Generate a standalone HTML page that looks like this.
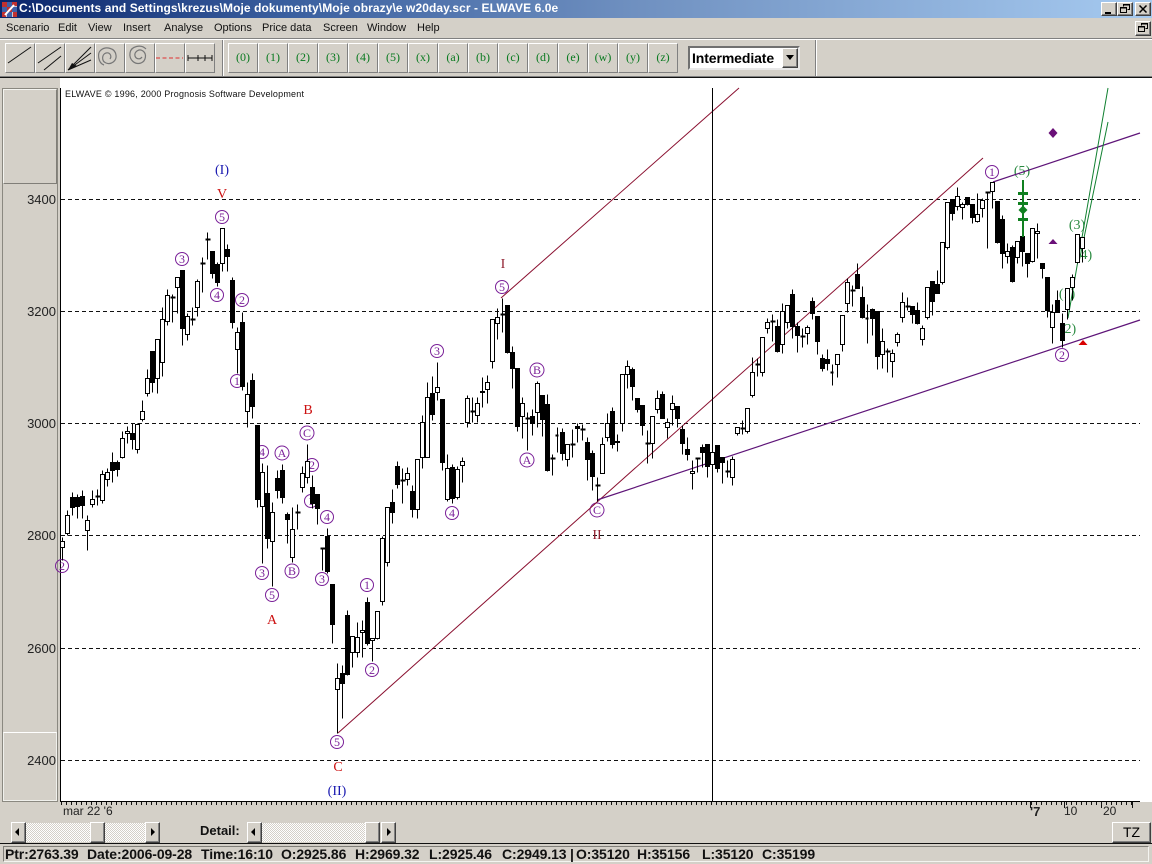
<!DOCTYPE html>
<html><head><meta charset="utf-8"><title>ELWAVE</title>
<style>
html,body{margin:0;padding:0;background:#d4d0c8;width:1152px;height:864px;overflow:hidden;font-family:"Liberation Sans",sans-serif}
.a{position:absolute}
#t{left:0;top:0;width:1152px;height:18px;background:linear-gradient(90deg,#0a246a 0,#3a5f9f 25%,#6f90c0 55%,#a6caf0 100%)}
#tt{left:19px;top:1px;color:#fff;font:bold 12px "Liberation Sans",sans-serif;white-space:nowrap;letter-spacing:.08px}
.w{box-sizing:border-box;background:#d4d0c8;border:1px solid;border-color:#fff #404040 #404040 #fff;box-shadow:inset -1px -1px 0 #808080}
.m{top:22px;font-size:11px;color:#111;white-space:nowrap}
.b{box-sizing:border-box;top:43px;width:30px;height:30px;background:#d4d0c8;border:1px solid;border-color:#fff #808080 #808080 #fff}
.g{font:12px/27px "Liberation Serif",serif;color:#0a7a20;text-align:center}
.tr{background:repeating-conic-gradient(#fff 0 25%,#d4d0c8 0 50%) 0 0/2px 2px}
.s{top:847px;font:bold 14px "Liberation Sans",sans-serif;color:#111;white-space:nowrap;line-height:15px;letter-spacing:-.1px}
</style></head><body>
<div class="a" id="t"></div>
<svg class="a" style="left:2px;top:2px" width="15" height="15"><rect width="15" height="15" fill="#c8c8d8"/><path d="M0 0h5v5H0zM10 0h5v4h-5zM5 5h5v5H5zM0 10h4v5H0zM11 10h4v5h-4z" fill="#c03030"/><path d="M5 0h5v5H5zM0 5h5v5H0zM10 5h5v5h-5zM5 10h5v5H5z" fill="#4060a8"/><path d="M3 13L12 3" stroke="#fff" stroke-width="2"/></svg>
<div class="a" id="tt">C:\Documents and Settings\krezus\Moje dokumenty\Moje obrazy\e w20day.scr - ELWAVE 6.0e</div>
<div class="a w" style="left:1101px;top:2px;width:16px;height:14px"><div class="a" style="left:3px;top:9px;width:6px;height:2px;background:#000"></div></div>
<div class="a w" style="left:1117px;top:2px;width:16px;height:14px"><svg class="a" style="left:2px;top:1px" width="10" height="10"><path d="M3.5 2.5V.5h6v5H7.500M.5 3.500h6v5h-6zM.5 4h6M3 1h6" fill="none" stroke="#000"/></svg></div>
<div class="a w" style="left:1135px;top:2px;width:16px;height:14px"><svg class="a" style="left:3px;top:2px" width="9" height="8"><path d="M.5 .5l7 7M7.500 .5l-7 7" stroke="#000" stroke-width="1.500"/></svg></div>
<div class="a w" style="left:1135px;top:21px;width:16px;height:15px"><svg class="a" style="left:2px;top:1px" width="10" height="10"><path d="M3.5 2.5V.5h6v5H7.500M.5 3.500h6v5h-6zM.5 4h6M3 1h6" fill="none" stroke="#000"/></svg></div>
<div class="a m" style="left:6px">Scenario</div><div class="a m" style="left:58px">Edit</div><div class="a m" style="left:88px">View</div><div class="a m" style="left:123px">Insert</div><div class="a m" style="left:164px">Analyse</div><div class="a m" style="left:214px">Options</div><div class="a m" style="left:262px">Price data</div><div class="a m" style="left:323px">Screen</div><div class="a m" style="left:367px">Window</div><div class="a m" style="left:417px">Help</div>
<div class="a" style="left:0;top:38px;width:1152px;height:1px;background:#808080"></div>
<div class="a" style="left:0;top:39px;width:1152px;height:1px;background:#fff"></div>
<div class="a b" style="left:5px"></div><div class="a b" style="left:35px"></div><div class="a b" style="left:65px"></div><div class="a b" style="left:95px"></div><div class="a b" style="left:125px"></div><div class="a b" style="left:155px"></div><div class="a b" style="left:185px"></div>
<svg class="a" style="left:0;top:40px" width="225" height="36" viewBox="0 40 225 36"><g fill="none" stroke="#111"><path d="M8 63L31 47M38 63L61 47M44 70L61 56M68 70L91 47M68 70L91 53M68 70L91 60"/><path d="M188 58H212M188 55V61M198 55V61M205 55V61M212 55V61"/></g><path d="M68 70l9-4-5-3z" fill="#111"/><g fill="none" stroke="#777" stroke-width="1.200"><path d="M104 65C98 63 97 53 101 50C106 46 115 48 116 55C117 61 111 65 106 63C101 61 102 54 106 53C110 52 112 56 110 59"/><path d="M146 49C141 44 131 46 130 53C129 60 135 65 141 63C146 61 147 54 143 51C139 48 134 52 135 56C136 59 140 60 142 57"/></g><path d="M156 58H183" stroke="#e03030" stroke-dasharray="4 2.500"/></svg>
<div class="a" style="left:222px;top:40px;width:1px;height:36px;background:#808080"></div><div class="a" style="left:223px;top:40px;width:1px;height:36px;background:#fff"></div>
<div class="a b g" style="left:228px">(0)</div><div class="a b g" style="left:258px">(1)</div><div class="a b g" style="left:288px">(2)</div><div class="a b g" style="left:318px">(3)</div><div class="a b g" style="left:348px">(4)</div><div class="a b g" style="left:378px">(5)</div><div class="a b g" style="left:408px">(x)</div><div class="a b g" style="left:438px">(a)</div><div class="a b g" style="left:468px">(b)</div><div class="a b g" style="left:498px">(c)</div><div class="a b g" style="left:528px">(d)</div><div class="a b g" style="left:558px">(e)</div><div class="a b g" style="left:588px">(w)</div><div class="a b g" style="left:618px">(y)</div><div class="a b g" style="left:648px">(z)</div>
<div class="a" style="box-sizing:border-box;left:688px;top:46px;width:112px;height:24px;background:#fff;border:2px solid;border-color:#707070 #e8e8e8 #e8e8e8 #707070;font:bold 14px/20px 'Liberation Sans',sans-serif;color:#000;padding-left:2px;letter-spacing:-.1px">Intermediate</div>
<div class="a w" style="left:782px;top:48px;width:16px;height:20px"><div class="a" style="left:3px;top:6px;width:0;height:0;border:4px solid transparent;border-top:5px solid #000;border-bottom:0"></div></div>
<div class="a" style="left:815px;top:40px;width:1px;height:36px;background:#808080"></div><div class="a" style="left:816px;top:40px;width:1px;height:36px;background:#fff"></div>
<div class="a" style="left:0;top:76px;width:1152px;height:1px;background:#808080"></div>
<div class="a" style="left:0;top:77px;width:1152px;height:1px;background:#111"></div>
<!-- left panel -->
<div class="a" style="box-sizing:border-box;left:2px;top:88px;width:56px;height:714px;border:1px solid #8a8880;background:#d4d0c8"></div>
<div class="a" style="box-sizing:border-box;left:3px;top:89px;width:54px;height:95px;border:1px solid;border-color:#f4f4f0 #807e78 #807e78 #f4f4f0;background:#d4d0c8"></div>
<div class="a" style="box-sizing:border-box;left:3px;top:732px;width:54px;height:69px;border:1px solid;border-color:#fff #f0f0ec #f0f0ec #f0f0ec;background:#d4d0c8"></div>
<!-- chart -->
<svg class="a" style="left:0;top:0" width="1152" height="864" viewBox="0 0 1152 864">
<rect x="60" y="78" width="1092" height="724" fill="#fff"/>
<path d="M60.500 88V802M60 801.500H1140" stroke="#000" fill="none"/>
<path d="M61 803.500H1133" stroke="#111" stroke-width="3" stroke-dasharray="1 4"/>
<path d="M1030.500 802V808M1064.500 802V808M1101.500 802V808M1132.500 802V808" stroke="#111"/>
<g font-family="Liberation Sans" font-size="13" fill="#222" text-anchor="end"><text x="56" y="204">3400</text><text x="56" y="316">3200</text><text x="56" y="428">3000</text><text x="56" y="540">2800</text><text x="56" y="653">2600</text><text x="56" y="765">2400</text></g>
<g font-family="Liberation Sans" font-size="12" fill="#222"><text x="63" y="815">mar 22 '6</text><text x="1064" y="815">10</text><text x="1103" y="815">20</text><text x="1030" y="816" font-weight="bold" font-size="13">'7</text></g>
<text x="65" y="97" font-family="Liberation Sans" font-size="9" fill="#111" textLength="239">ELWAVE © 1996, 2000 Prognosis Software Development</text>
<path d="M61 199.500H1140M61 311.500H1140M61 423.500H1140M61 535.500H1140M61 648.500H1140M61 760.500H1140" stroke="#111" stroke-dasharray="4 3"/>
<!-- labels -->
<g fill="none" stroke="#7a2098" stroke-width="1">
<circle cx="62" cy="566" r="6.500"/><circle cx="182" cy="259" r="6.500"/><circle cx="222" cy="217" r="6.500"/><circle cx="217" cy="295" r="6.500"/><circle cx="242" cy="300" r="6.500"/><circle cx="237" cy="381" r="6.500"/><circle cx="262" cy="452" r="6.500"/><circle cx="282" cy="453" r="7"/><circle cx="307" cy="433" r="7"/><circle cx="312" cy="465" r="6.500"/><circle cx="311" cy="501" r="6.500"/><circle cx="327" cy="517" r="6.500"/><circle cx="322" cy="579" r="6.500"/><circle cx="262" cy="573" r="6.500"/><circle cx="272" cy="595" r="6.500"/><circle cx="292" cy="571" r="7"/><circle cx="367" cy="585" r="6.500"/><circle cx="372" cy="670" r="6.500"/><circle cx="337" cy="742" r="6.500"/><circle cx="452" cy="513" r="6.500"/><circle cx="437" cy="351" r="6.500"/><circle cx="502" cy="287" r="6.500"/><circle cx="537" cy="370" r="7"/><circle cx="527" cy="460" r="7"/><circle cx="597" cy="510" r="7"/><circle cx="992" cy="172" r="6.500"/><circle cx="1062" cy="355" r="6.500"/>
</g>
<g font-family="Liberation Serif" font-size="12" fill="#7a2098" text-anchor="middle">
<text x="62" y="570">2</text><text x="182" y="263">3</text><text x="222" y="221">5</text><text x="217" y="299">4</text><text x="242" y="304">2</text><text x="237" y="385">1</text><text x="262" y="456">4</text><text x="282" y="457">A</text><text x="307" y="437">C</text><text x="312" y="469">2</text><text x="311" y="505">1</text><text x="327" y="521">4</text><text x="322" y="583">3</text><text x="262" y="577">3</text><text x="272" y="599">5</text><text x="292" y="575">B</text><text x="367" y="589">1</text><text x="372" y="674">2</text><text x="337" y="746">5</text><text x="452" y="517">4</text><text x="437" y="355">3</text><text x="502" y="291">5</text><text x="537" y="374">B</text><text x="527" y="464">A</text><text x="597" y="514">C</text><text x="992" y="176">1</text><text x="1062" y="359">2</text>
</g>
<g font-family="Liberation Serif" font-size="14" text-anchor="middle">
<g fill="#cc1010"><text x="222" y="198">V</text><text x="308" y="414">B</text><text x="272" y="624">A</text><text x="338" y="771">C</text></g>
<g fill="#902030"><text x="503" y="268">I</text><text x="597" y="539">II</text></g>
<g fill="#1818b0"><text x="222" y="174">(I)</text><text x="337" y="795">(II)</text></g>
<g fill="#2a8a40"><text x="1022" y="175">(5)</text><text x="1077" y="229">(3)</text><text x="1084" y="259">(4)</text><text x="1067" y="298">(1)</text><text x="1068" y="333">(2)</text></g>
</g>
<!-- trend lines -->
<g fill="none">
<path d="M338 733L983 158M501 298L739 88" stroke="#8a1030"/>
<path d="M597 500L1140 320M993 182L1140 133" stroke="#5e1478" stroke-width="1.200"/>
<path d="M1068 318L1108 88M1079 262L1108 122" stroke="#108030"/>
<path d="M712.500 88V802" stroke="#000"/>
</g>
<!-- candles -->
<g transform="translate(.5 .5)" shape-rendering="crispEdges" fill="none" stroke="#000">
<path d="M62 537V560M67 510V535M72 492V515M77 494V518M82 490V518M87 515V550M92 490V507M97 489V505M102 470V503M107 468V486M112 452V482M117 460V476M122 431V458M127 426V443M132 423V449M137 423V453M142 400V421M147 369V396M152 351V392M157 339V393M162 307V376M167 289V325M172 294V322M177 277V313M182 270V345M187 313V340M192 307V325M197 279V316M202 257V292M207 232V259M212 251V278M217 262V286M222 228V271M227 244V271M232 277V328M237 327V373M242 312V390M247 382V427M252 373V418M257 425V507M262 463V563M267 465V548M272 502V586M277 470V498M282 464V503M287 512V543M292 507V562M297 504V529M302 466V492M307 444V483M312 475V508M317 494V524M322 547V570M327 528V573M332 584V643M337 663V733M342 665V718M347 610V675M352 636V667M357 622V657M362 620V657M367 597V645M372 638V661M377 611V639M382 536V605M387 507V566M392 489V523M397 461V488M402 468V503M407 467V485M412 485V517M417 459V518M422 415V468M427 382V457M432 376V420M437 362V400M442 399V470M447 454V501M452 464V503M457 466V499M462 457V482M467 395V427M472 397V422M477 397V422M482 377V407M487 375V403M492 319V368M497 308V339M502 298V332M507 305V353M512 346V388M517 368V431M522 397V438M527 412V450M532 409V435M537 381V427M542 395V436M547 394V471M552 454V475M557 427V452M562 428V460M567 444V466M572 429V457M577 423V442M582 424V440M587 437V480M592 450V490M597 477V501M602 437V473M607 413V441M612 407V448M617 434V451M622 374V431M627 360V388M632 367V400M637 398V412M642 405V435M647 430V463M652 416V458M657 390V413M662 391V418M667 418V438M672 395V425M677 406V427M682 425V454M687 437V460M692 460V489M697 457V472M702 444V467M707 444V477M717 445V472M722 457V483M727 460V477M732 456V485M737 427V435M742 420V434M747 408V433M752 357V397M757 358V376M762 337V376M767 318V333M772 314V341M777 319V352M782 303V353M787 305V328M792 289V338M797 322V352M802 328V347M807 325V344M812 297V319M817 316V354M822 354V371M827 349V370M832 364V385M837 354V377M842 315V351M847 278V312M852 285V306M857 263V288M862 286V318M867 304V343M872 308V335M877 311V369M882 328V368M887 348V372M892 349V377M897 332V346M902 292V322M907 297V310M912 306V323M917 302V324M922 325V345M927 287V319M932 281V315M937 270V293M942 242V284M947 202V249M952 199V220M957 187V210M962 202V219M967 197V205M972 204V223M977 193V222M982 198V217M987 192V248M992 182V208M997 201V243M1002 215V268M1007 243V263M1012 245V282M1017 241V263M1022 234V266M1027 253V277M1032 228V262M1037 223V258M1042 263V278M1047 277V317M1052 304V343M1057 290V312M1062 313V347M1067 288V319M1072 274V300M1077 234V263M1082 237V262"/>
<path fill="#fff" d="M60 541h4v6h-4zM65 515h4v18h-4zM85 520h4v10h-4zM90 499h4v5h-4zM100 474h4v26h-4zM105 472h4v7h-4zM120 438h4v19h-4zM125 431h4v2h-4zM135 424h4v25h-4zM140 411h4v8h-4zM145 378h4v15h-4zM155 339h4v39h-4zM160 319h4v43h-4zM165 295h4v26h-4zM175 277h4v10h-4zM185 316h4v18h-4zM195 281h4v26h-4zM220 228h4v35h-4zM235 332h4v17h-4zM245 394h4v17h-4zM260 472h4v34h-4zM270 512h4v29h-4zM290 529h4v28h-4zM300 473h4v14h-4zM305 461h4v16h-4zM335 678h4v11h-4zM350 636h4v16h-4zM355 637h4v15h-4zM360 630h4v2h-4zM370 638h4v2h-4zM375 611h4v27h-4zM380 538h4v63h-4zM385 507h4v55h-4zM405 473h4v6h-4zM415 459h4v50h-4zM420 422h4v35h-4zM425 397h4v60h-4zM435 387h4v5h-4zM445 468h4v31h-4zM455 469h4v28h-4zM460 461h4v4h-4zM465 398h4v24h-4zM475 403h4v12h-4zM480 391h4v1h-4zM485 382h4v7h-4zM490 319h4v42h-4zM495 317h4v6h-4zM520 403h4v13h-4zM535 383h4v29h-4zM565 444h4v15h-4zM600 444h4v29h-4zM605 423h4v14h-4zM615 441h4v1h-4zM620 374h4v49h-4zM625 366h4v8h-4zM650 416h4v27h-4zM655 398h4v11h-4zM665 422h4v5h-4zM670 403h4v6h-4zM690 471h4v2h-4zM710 452h4v12h-4zM730 459h4v18h-4zM735 427h4v6h-4zM745 408h4v23h-4zM750 372h4v23h-4zM760 337h4v35h-4zM765 322h4v6h-4zM780 311h4v33h-4zM785 305h4v17h-4zM805 327h4v6h-4zM835 354h4v10h-4zM840 315h4v29h-4zM845 282h4v21h-4zM880 341h4v13h-4zM890 353h4v8h-4zM895 334h4v8h-4zM900 302h4v15h-4zM920 328h4v11h-4zM925 287h4v30h-4zM940 242h4v40h-4zM945 202h4v45h-4zM955 196h4v10h-4zM960 204h4v3h-4zM975 214h4v7h-4zM980 200h4v8h-4zM990 182h4v9h-4zM1005 251h4v5h-4zM1015 241h4v16h-4zM1030 228h4v33h-4zM1035 231h4v2h-4zM1050 312h4v15h-4zM1065 288h4v21h-4zM1070 277h4v10h-4zM1075 234h4v28h-4zM1080 237h4v11h-4z"/>
<path fill="#000" d="M70 497h4v10h-4zM75 497h4v9h-4zM80 496h4v9h-4zM110 462h4v8h-4zM115 462h4v7h-4zM130 433h4v6h-4zM150 351h4v31h-4zM180 270h4v58h-4zM210 251h4v22h-4zM215 264h4v18h-4zM225 249h4v7h-4zM230 280h4v42h-4zM240 322h4v64h-4zM250 380h4v26h-4zM255 425h4v74h-4zM265 493h4v45h-4zM275 478h4v12h-4zM280 470h4v27h-4zM285 514h4v5h-4zM310 487h4v16h-4zM315 494h4v14h-4zM325 536h4v35h-4zM330 584h4v40h-4zM340 673h4v10h-4zM345 615h4v59h-4zM365 602h4v41h-4zM390 502h4v10h-4zM395 466h4v18h-4zM410 491h4v18h-4zM430 393h4v21h-4zM440 399h4v63h-4zM450 467h4v31h-4zM505 305h4v47h-4zM510 352h4v16h-4zM515 368h4v58h-4zM530 416h4v7h-4zM540 395h4v24h-4zM545 404h4v66h-4zM560 432h4v21h-4zM575 426h4v2h-4zM585 442h4v17h-4zM590 453h4v23h-4zM610 411h4v33h-4zM630 369h4v17h-4zM635 398h4v11h-4zM640 405h4v20h-4zM660 394h4v24h-4zM675 406h4v12h-4zM680 429h4v14h-4zM685 449h4v5h-4zM700 447h4v5h-4zM705 444h4v22h-4zM715 445h4v23h-4zM720 457h4v5h-4zM775 326h4v25h-4zM790 294h4v32h-4zM795 326h4v9h-4zM810 301h4v12h-4zM815 316h4v25h-4zM820 358h4v10h-4zM825 359h4v4h-4zM855 274h4v14h-4zM860 297h4v20h-4zM870 309h4v9h-4zM875 311h4v45h-4zM910 306h4v8h-4zM915 310h4v13h-4zM930 281h4v20h-4zM935 284h4v9h-4zM950 199h4v14h-4zM965 197h4v7h-4zM970 204h4v13h-4zM995 201h4v41h-4zM1000 219h4v34h-4zM1010 247h4v34h-4zM1020 236h4v15h-4zM1025 253h4v10h-4zM1040 263h4v5h-4zM1045 277h4v33h-4zM1055 300h4v12h-4zM1060 323h4v17h-4z"/>
<path stroke-width="2" d="M95 496h5M170 297h5M190 319h5M200 263h5M205 239h5M295 512h5M320 548h5M400 480h5M470 411h5M500 314h5M525 418h5M550 458h5M555 435h3M570 444h5M580 429h5M595 485h5M645 443h5M695 458h5M725 471h5M740 428h5M755 364h5M770 321h5M800 336h5M830 372h3M850 290h5M865 318h3M885 351h5M905 306h5M985 192h5"/>
</g>
<!-- markers -->
<g fill="#108020" stroke="none"><rect x="1022" y="180" width="2" height="57"/><rect x="1018" y="192" width="10" height="3"/><rect x="1018" y="202" width="10" height="3"/><rect x="1018" y="218" width="10" height="3"/><path d="M1023 205.500l4.500 4.500-4.500 4.500-4.500-4.500z"/></g>
<path d="M1053 128l4.500 5-4.500 5-4.500-5z" fill="#6a1078"/>
<path d="M1053 239l4.500 5h-9z" fill="#6a1078"/>
<path d="M1083 340l4.500 5h-9z" fill="#d80000"/>
</svg>
<!-- bottom -->
<div class="a tr" style="left:25px;top:823px;width:120px;height:19px"></div>
<div class="a w" style="left:11px;top:822px;width:15px;height:21px"><div class="a" style="left:3px;top:5px;width:0;height:0;border:4px solid transparent;border-right:4px solid #000;border-left:0"></div></div>
<div class="a w" style="left:90px;top:822px;width:15px;height:21px"></div>
<div class="a w" style="left:145px;top:822px;width:15px;height:21px"><div class="a" style="left:5px;top:5px;width:0;height:0;border:4px solid transparent;border-left:4px solid #000;border-right:0"></div></div>
<div class="a" style="left:200px;top:823px;font:bold 13px 'Liberation Sans',sans-serif;color:#111">Detail:</div>
<div class="a tr" style="left:261px;top:823px;width:105px;height:19px"></div>
<div class="a w" style="left:247px;top:822px;width:15px;height:21px"><div class="a" style="left:3px;top:5px;width:0;height:0;border:4px solid transparent;border-right:4px solid #000;border-left:0"></div></div>
<div class="a w" style="left:365px;top:822px;width:15px;height:21px"></div>
<div class="a w" style="left:381px;top:822px;width:15px;height:21px"><div class="a" style="left:5px;top:5px;width:0;height:0;border:4px solid transparent;border-left:4px solid #000;border-right:0"></div></div>
<div class="a w" style="left:1112px;top:822px;width:39px;height:21px;font:14px/18px 'Liberation Sans',sans-serif;text-align:center;color:#000">TZ</div>
<div class="a" style="left:0;top:843px;width:1152px;height:1px;background:#111"></div>
<div class="a" style="box-sizing:border-box;left:3px;top:846px;width:1146px;height:16px;border:1px solid;border-color:#807e78 #f4f4f0 #f4f4f0 #807e78"></div>
<div class="a s" style="left:5px">Ptr:2763.39</div><div class="a s" style="left:87px">Date:2006-09-28</div><div class="a s" style="left:201px">Time:16:10</div><div class="a s" style="left:281px">O:2925.86</div><div class="a s" style="left:355px">H:2969.32</div><div class="a s" style="left:429px">L:2925.46</div><div class="a s" style="left:502px">C:2949.13</div><div class="a s" style="left:570px">|</div><div class="a s" style="left:576px">O:35120</div><div class="a s" style="left:637px">H:35156</div><div class="a s" style="left:702px">L:35120</div><div class="a s" style="left:762px">C:35199</div>
</body></html>
